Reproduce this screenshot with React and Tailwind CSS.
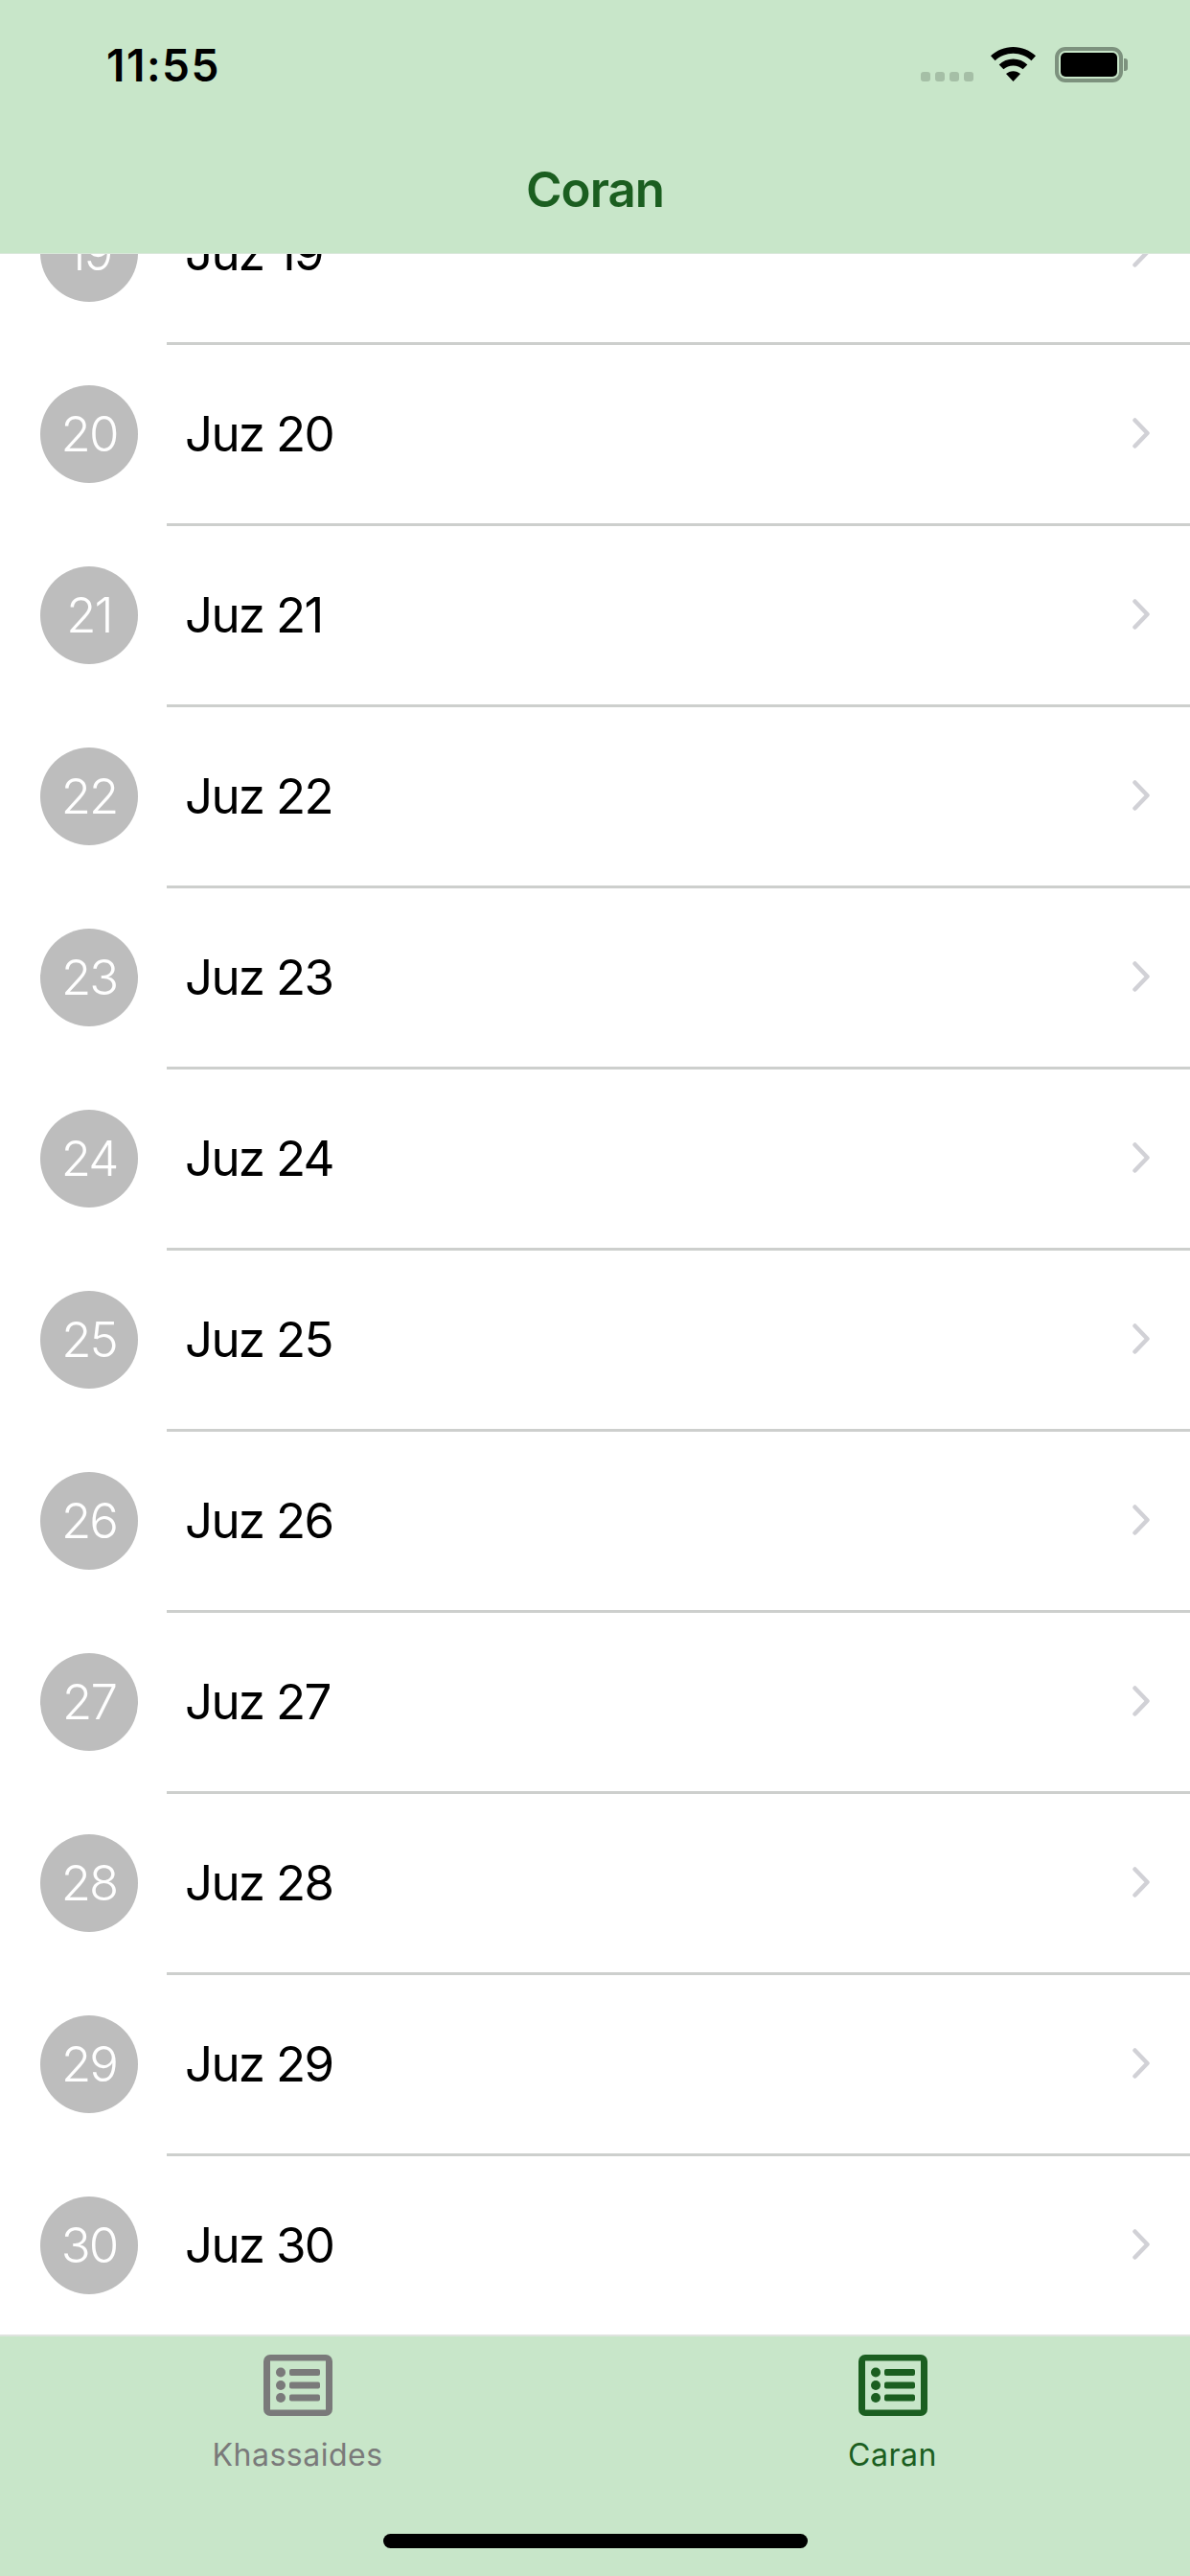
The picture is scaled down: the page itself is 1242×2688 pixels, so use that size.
const rows = [19, 20, 21, 22, 23, 24, 25, 26, 27, 28, 29, 30];

function ListIcon({ className }) {
  return (
    <svg viewBox="0 0 72 64" className={`w-[72px] h-[64px] ${className}`} fill="currentColor">
      <path
        fillRule="evenodd"
        d="M7 0h58a7 7 0 0 1 7 7v50a7 7 0 0 1-7 7H7a7 7 0 0 1-7-7V7a7 7 0 0 1 7-7zM7 6.500v51h58v-51z"
      />
      <circle cx="18" cy="18.500" r="5" />
      <circle cx="18" cy="32" r="5" />
      <circle cx="18" cy="45" r="5" />
      <rect x="27" y="15" width="32" height="7" rx="2" />
      <rect x="27" y="28.500" width="32" height="7" rx="2" />
      <rect x="27" y="41.500" width="32" height="7" rx="2" />
    </svg>
  );
}

function Wifi() {
  return (
    <svg viewBox="0 0 47 36" className="w-[47px] h-[36px]" fill="#000">
      <path d="M23.500 0C32.500 0 40.700 3.500 47 9.300l-4.600 4.900C37.300 9.600 30.700 6.800 23.500 6.800S9.700 9.600 4.600 14.200L0 9.300C6.300 3.500 14.500 0 23.500 0z" />
      <path d="M23.500 12.600c5.700 0 10.900 2.200 14.800 5.800l-4.700 4.900c-2.700-2.400-6.200-3.900-10.100-3.900s-7.400 1.500-10.100 3.900l-4.700-4.900c3.900-3.600 9.100-5.800 14.800-5.800z" />
      <path d="M23.500 25.200c2.900 0 5.500 1.100 7.500 2.900L23.500 36 16 28.100c2-1.800 4.600-2.900 7.500-2.900z" />
    </svg>
  );
}

function Row({ n, last }) {
  return (
    <div className="flex h-[189px] shrink-0 items-start bg-white">
      <div className="ml-[42px] mt-[42px] flex h-[102px] w-[102px] shrink-0 items-center justify-center rounded-full bg-[#bdbdbd] text-[51px] font-light tracking-[-2px] text-white">
        {n}
      </div>
      <div
        className={`ml-[30px] flex h-[189px] flex-1 items-center justify-between border-b-[3px] pl-[19px] pr-[42px] ${
          last ? "border-transparent" : "border-[#cdcfcd]"
        }`}
      >
        <span className="text-[51px] tracking-[-1.700px] text-black">Juz {n}</span>
        <svg viewBox="0 0 18 32" className="mb-[3px] h-[32px] w-[18px]" fill="none" stroke="#d1d1d6" strokeWidth="4.500" strokeLinecap="round" strokeLinejoin="round">
          <path d="M2.500 2.500 15.500 16 2.500 29.500" />
        </svg>
      </div>
    </div>
  );
}

export default function App() {
  return (
    <div className="flex h-[2688px] w-[1242px] flex-col overflow-hidden bg-white font-['Inter',sans-serif]">
      <div className="h-[265px] shrink-0 border-b border-[#d9e8da] bg-[#c8e6c9]">
        <div className="flex h-[132px] items-start justify-between pl-[111px] pr-[65px] pt-[41px]">
          <span className="text-[46px] font-semibold leading-[54px] tracking-[1.500px] text-black">11:55</span>
          <div className="flex items-start pt-[8px]">
            <div className="mt-[26px] flex gap-[5px]">
              <div className="h-[10px] w-[10px] rounded-[3px] bg-[#a5bfa6]" />
              <div className="h-[10px] w-[10px] rounded-[3px] bg-[#a5bfa6]" />
              <div className="h-[10px] w-[10px] rounded-[3px] bg-[#a5bfa6]" />
              <div className="h-[10px] w-[10px] rounded-[3px] bg-[#a5bfa6]" />
            </div>
            <div className="ml-[18px]">
              <Wifi />
            </div>
            <div className="ml-[20px] flex items-center">
              <div className="h-[37px] w-[71px] rounded-[11px] border-[4px] border-[#7d927e] p-[2px]">
                <div className="h-full w-full rounded-[5px] bg-black" />
              </div>
              <div className="ml-[1px] h-[13px] w-[4px] rounded-r-[3px] bg-[#7d927e]" />
            </div>
          </div>
        </div>
        <div className="pt-[35px] text-center text-[51px] font-semibold leading-[62px] tracking-[-1px] text-[#1b5e20]">Coran</div>
      </div>

      <div className="flex min-h-0 flex-1 flex-col overflow-hidden">
        <div className="mt-[-94px] flex flex-col">
          {rows.map((n) => (
            <Row key={n} n={n} last={n === 30} />
          ))}
        </div>
      </div>

      <div className="h-[252px] shrink-0 border-t-2 border-[#dfe3df] bg-[#c8e6c9]">
        <div className="flex pt-[19px]">
          <div className="flex flex-1 flex-col items-center text-[#7a7a7a]">
            <ListIcon />
            <span className="mt-[22px] text-[32px] leading-[38px] tracking-[0.500px]">Khassaides</span>
          </div>
          <div className="flex flex-1 flex-col items-center text-[#1b5e20]">
            <ListIcon />
            <span className="mt-[22px] text-[32px] leading-[38px] tracking-[0.500px]">Caran</span>
          </div>
        </div>
        <div className="mt-[63px] flex justify-center">
          <div className="h-[15px] w-[443px] rounded-full bg-black" />
        </div>
      </div>
    </div>
  );
}
